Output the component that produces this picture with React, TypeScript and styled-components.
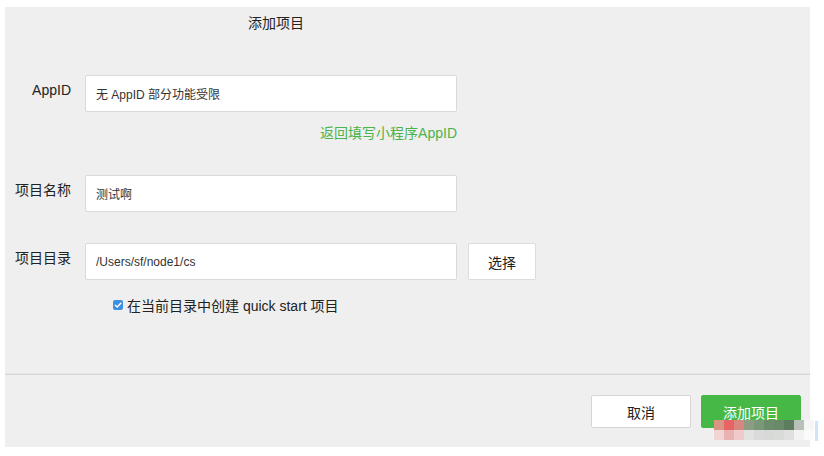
import { useState } from "react";
import styled, { createGlobalStyle } from "styled-components";

const FONT = `"Liberation Sans", "Noto Sans CJK SC", sans-serif`;

const GlobalStyle = createGlobalStyle`
  html, body {
    margin: 0;
    padding: 0;
    background: #ffffff;
  }
  body {
    font-family: ${FONT};
    color: #333;
  }
`;

const mosaic = [
  ["#d99484", "#e86464", "#d98680", "#8e9c84", "#7a9878", "#6c8c6c", "#6a886a", "#5e7c5e", "#b9c2b9", "#f6f6f6"],
  ["#f1d4d4", "#e9b2b2", "#f0caca", "#e2e2e2", "#dadada", "#d8d8d8", "#d8dbd8", "#e0e0e0", "#f2f2f2", "#fbfbfb"],
];

const App = () => {
  const [quickStart, setQuickStart] = useState(true);

  return (
    <Page>
      <GlobalStyle />
      <Panel>
        <Body>
          <Title>添加项目</Title>
          <Form>
            <Row>
              <Label>AppID</Label>
              <Field>
                <Input defaultValue="无 AppID 部分功能受限" />
                <LinkRow>
                  <GreenLink>返回填写小程序AppID</GreenLink>
                </LinkRow>
              </Field>
            </Row>
            <Row $gap={29}>
              <Label>项目名称</Label>
              <Field>
                <Input defaultValue="测试啊" />
              </Field>
            </Row>
            <Row $gap={31}>
              <Label>项目目录</Label>
              <Field>
                <Input defaultValue="/Users/sf/node1/cs" />
              </Field>
              <PickButton>选择</PickButton>
            </Row>
            <CheckRow onClick={() => setQuickStart(!quickStart)}>
              <CheckBox $checked={quickStart}>
                {quickStart && (
                  <svg width="10" height="10" viewBox="0 0 10 10">
                    <path d="M2.3 5.2 L4.2 7 L7.8 3.2" fill="none" stroke="#fff" strokeWidth="1.5" strokeLinecap="round" strokeLinejoin="round" />
                  </svg>
                )}
              </CheckBox>
              <span>在当前目录中创建 quick start 项目</span>
            </CheckRow>
          </Form>
        </Body>
        <Footer>
          <Button>取消</Button>
          <Button $primary>添加项目</Button>
        </Footer>
        <Mosaic>
          {mosaic.map((row, i) => (
            <MosaicRow key={i}>
              {row.map((c, j) => (
                <Cell key={j} style={{ background: c }} />
              ))}
            </MosaicRow>
          ))}
        </Mosaic>
      </Panel>
      <SideMark />
    </Page>
  );
};

const Page = styled.div`
  position: relative;
  width: 824px;
  height: 456px;
  padding: 7px 0 0 5px;
  box-sizing: border-box;
`;

const Panel = styled.div`
  position: relative;
  width: 805px;
  height: 440px;
  background: #efefef;
  display: flex;
  flex-direction: column;
`;

const Body = styled.div`
  flex: 1;
  border-bottom: 1px solid #d6d6d6;
  box-shadow: inset 0 -5px 0 -4px #e6e6e6;
`;

const Title = styled.div`
  height: 32px;
  line-height: 32px;
  padding-left: 243px;
  font-size: 14px;
  color: #222;
`;

const Form = styled.div`
  margin-top: 36px;
  display: flex;
  flex-direction: column;
`;

const Row = styled.div<{ $gap?: number }>`
  display: flex;
  align-items: flex-start;
  margin-top: ${(p) => p.$gap ?? 0}px;
`;

const Label = styled.div`
  width: 66px;
  padding-top: 5px;
  margin-right: 14px;
  text-align: right;
  font-size: 14px;
  line-height: 20px;
  color: #222;
`;

const Field = styled.div`
  width: 372px;
  display: flex;
  flex-direction: column;
`;

const Input = styled.input`
  box-sizing: border-box;
  width: 372px;
  height: 37px;
  padding: 0 10px;
  border: 1px solid #dadada;
  border-radius: 2px;
  background: #fff;
  font-family: ${FONT};
  font-size: 12px;
  color: #333;
  outline: none;
`;

const LinkRow = styled.div`
  margin-top: 8px;
  height: 26px;
  line-height: 26px;
  text-align: right;
`;

const GreenLink = styled.a`
  font-size: 14px;
  color: #4cb34c;
  cursor: pointer;
`;

const PickButton = styled.button`
  box-sizing: border-box;
  width: 68px;
  height: 37px;
  margin-left: 11px;
  border: 1px solid #dcdcdc;
  border-radius: 2px;
  background: #fff;
  font-family: ${FONT};
  font-size: 14px;
  color: #222;
`;

const CheckRow = styled.label`
  display: flex;
  align-items: center;
  gap: 4px;
  margin-top: 15px;
  padding-left: 108px;
  height: 20px;
  font-size: 14px;
  color: #222;
  cursor: pointer;
`;

const CheckBox = styled.span<{ $checked: boolean }>`
  width: 10px;
  height: 10px;
  border-radius: 2px;
  background: ${(p) => (p.$checked ? "#3d8fe3" : "#fff")};
  border: ${(p) => (p.$checked ? "none" : "1px solid #aaa")};
  display: flex;
  align-items: center;
  justify-content: center;
`;

const Footer = styled.div`
  height: 72px;
  box-sizing: border-box;
  padding: 20px 9px 0 0;
  display: flex;
  justify-content: flex-end;
  align-items: flex-start;
  gap: 10px;
`;

const Button = styled.button<{ $primary?: boolean }>`
  box-sizing: border-box;
  width: 100px;
  height: 33px;
  border-radius: 2px;
  border: 1px solid ${(p) => (p.$primary ? "#45b845" : "#d6d6d6")};
  background: ${(p) => (p.$primary ? "#45b845" : "#fff")};
  color: ${(p) => (p.$primary ? "#fff" : "#222")};
  font-family: ${FONT};
  font-size: 14px;
`;

const Mosaic = styled.div`
  position: absolute;
  left: 709px;
  top: 413px;
  display: flex;
  flex-direction: column;
`;

const MosaicRow = styled.div`
  display: flex;
`;

const Cell = styled.div`
  width: 10px;
  height: 10px;
`;

const SideMark = styled.div`
  position: absolute;
  left: 815px;
  top: 421px;
  width: 3px;
  height: 20px;
  background: #cfe4f7;
`;

export default App;
